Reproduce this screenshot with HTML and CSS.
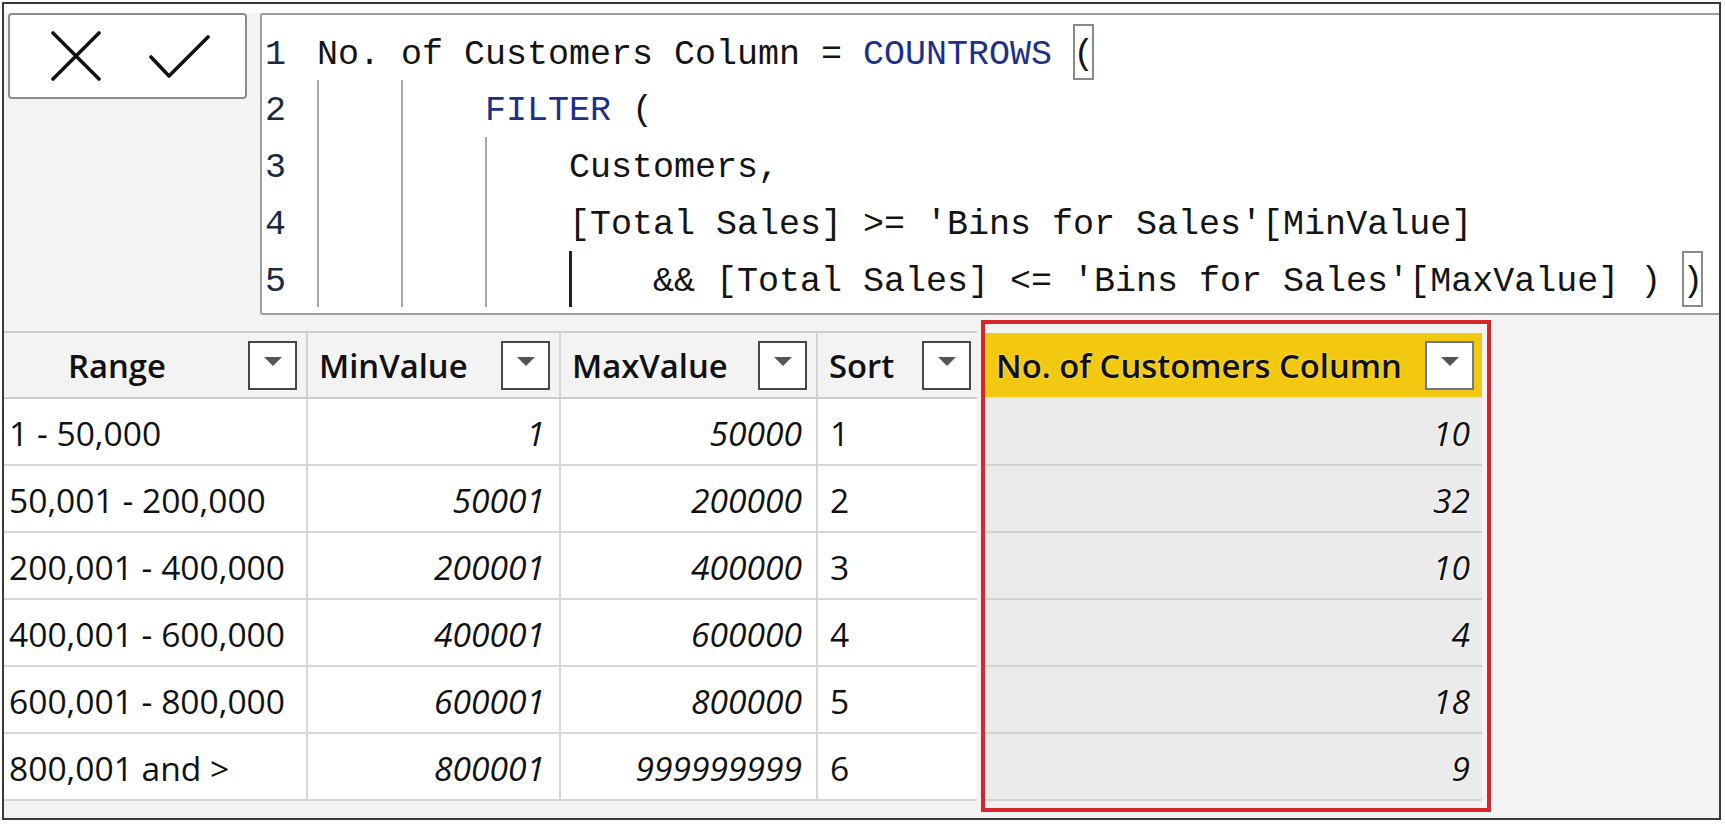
FILE: index.html
```html
<!DOCTYPE html>
<html lang="en">
<head>
<meta charset="utf-8">
<title>No. of Customers Column</title>
<link rel="stylesheet" href="styles.css">
</head>
<body>
<div class="frame">
  <div class="fbar">
    <div class="btns">
      <svg class="ic-x" width="50" height="50" viewBox="0 0 50 50"><path d="M2 2L48 48M48 2L2 48" fill="none" stroke="#111" stroke-width="3.6" stroke-linecap="round"/></svg>
      <svg class="ic-ok" width="62" height="44" viewBox="0 0 62 44"><path d="M2 22L20 41L59 2" fill="none" stroke="#111" stroke-width="3.6" stroke-linecap="round" stroke-linejoin="round"/></svg>
    </div>
    <div class="code">
      <div class="ln"><span class="num">1</span><span class="src">No. of Customers Column = <span class="kw">COUNTROWS</span> <span class="br">(</span></span></div>
      <div class="ln"><span class="num">2</span><span class="src"><span class="ind"></span><span class="ind"></span><span class="kw">FILTER</span> (</span></div>
      <div class="ln"><span class="num">3</span><span class="src"><span class="ind"></span><span class="ind"></span><span class="ind"></span>Customers,</span></div>
      <div class="ln"><span class="num">4</span><span class="src"><span class="ind"></span><span class="ind"></span><span class="ind"></span>[Total Sales] &gt;= 'Bins for Sales'[MinValue]</span></div>
      <div class="ln"><span class="num">5</span><span class="src"><span class="ind"></span><span class="ind"></span><span class="ind"></span><span class="ind dark"></span>&amp;&amp; [Total Sales] &lt;= 'Bins for Sales'[MaxValue] ) <span class="br">)</span></span></div>
    </div>
  </div>

  <div class="table">
    <div class="grid">
      <div class="h c1 range"><span>Range</span><span class="dd"></span></div>
      <div class="h c2"><span>MinValue</span><span class="dd"></span></div>
      <div class="h c3"><span>MaxValue</span><span class="dd"></span></div>
      <div class="h c4"><span>Sort</span><span class="dd"></span></div>
      <div class="h cc"><span>No. of Customers Column</span><span class="dd blue"></span></div>

      <div class="d c1">1 - 50,000</div>
      <div class="d c2 num-r">1</div>
      <div class="d c3 num-r">50000</div>
      <div class="d c4">1</div>
      <div class="d cc num-r">10</div>

      <div class="d c1">50,001 - 200,000</div>
      <div class="d c2 num-r">50001</div>
      <div class="d c3 num-r">200000</div>
      <div class="d c4">2</div>
      <div class="d cc num-r">32</div>

      <div class="d c1">200,001 - 400,000</div>
      <div class="d c2 num-r">200001</div>
      <div class="d c3 num-r">400000</div>
      <div class="d c4">3</div>
      <div class="d cc num-r">10</div>

      <div class="d c1">400,001 - 600,000</div>
      <div class="d c2 num-r">400001</div>
      <div class="d c3 num-r">600000</div>
      <div class="d c4">4</div>
      <div class="d cc num-r">4</div>

      <div class="d c1">600,001 - 800,000</div>
      <div class="d c2 num-r">600001</div>
      <div class="d c3 num-r">800000</div>
      <div class="d c4">5</div>
      <div class="d cc num-r">18</div>

      <div class="d c1">800,001 and &gt;</div>
      <div class="d c2 num-r">800001</div>
      <div class="d c3 num-r">999999999</div>
      <div class="d c4">6</div>
      <div class="d cc num-r">9</div>
    </div>
    <div class="highlight"></div>
  </div>
</div>
</body>
</html>
```

FILE: styles.css
```css
* { box-sizing: border-box; }

html, body {
  margin: 0;
  padding: 0;
  background: #ffffff;
}

.frame {
  margin: 2px 0 0 2px;
  width: 1719px;
  height: 818px;
  border: 2px solid #3a3a3a;
  background: #f3f3f3;
  overflow: hidden;
}

/* ---------- formula bar ---------- */
.fbar {
  height: 327px;
  display: flex;
  align-items: flex-start;
  padding: 9px 0 0 4px;
  gap: 13px;
  background: linear-gradient(#ffffff 0, #ffffff 9px, #f3f3f3 9px);
}

.btns {
  width: 239px;
  height: 86px;
  border: 2px solid #8c8c8c;
  border-radius: 4px;
  background: #ffffff;
  display: flex;
  align-items: center;
  padding-left: 41px;
  gap: 48px;
}

.ic-ok { margin-top: 1px; }

.code {
  flex: 1;
  height: 302px;
  border: 2px solid #9d9d9d;
  border-right: none;
  border-radius: 3px 0 0 3px;
  background: #ffffff;
  padding: 8.6px 0 0 3px;
  font-family: "Liberation Mono", "DejaVu Sans Mono", monospace;
  font-size: 35px;
  color: #141414;
}

.ln {
  display: flex;
  align-items: flex-start;
  height: 56.75px;
  white-space: pre;
}

.num, .src {
  line-height: 62px;
}

.num {
  width: 52px;
  color: #1b2a44;
}

.src { white-space: pre; }

.kw { color: #1d2f86; }

.ind {
  display: inline-block;
  width: 84px;
  height: 56.75px;
  vertical-align: top;
  background: linear-gradient(#a8a8a8, #a8a8a8) no-repeat 0 0 / 2px 100%;
}

.ind.dark {
  background: linear-gradient(#222, #222) no-repeat 0 0 / 3px 100%;
}

.br {
  display: inline-block;
  height: 56.75px;
  line-height: 62px;
  vertical-align: top;
  box-shadow: inset 0 0 0 2px #8a8a8a;
}

/* ---------- table ---------- */
.table {
  position: relative;
}

.grid {
  display: grid;
  grid-template-columns: 304px 253px 257px 159px 505px;
  font-family: "Open Sans", "Noto Sans", sans-serif;
  color: #111;
}

.h {
  height: 68px;
  border-top: 2px solid #cdcdcd;
  border-bottom: 2px solid #cdcdcd;
  background: #f3f3f3;
  display: flex;
  align-items: center;
  justify-content: space-between;
  padding: 0 9px 0 11px;
  font-size: 32.8px;
  font-weight: 600;
}

.h.range { padding-left: 64px; }

.h.c1, .h.c2, .h.c3 { border-right: 2px solid #d3d3d3; }
.h.c4 { padding-right: 6px; }

.h.cc {
  margin-left: 8px;
  background: #f2c811;
  border-top-color: #f3f3f3;
  border-bottom-color: #e6e6e6;
  padding-right: 8px;
  text-shadow: 0 0 2px #fff6b0;
}

.dd {
  width: 49px;
  height: 49px;
  border: 2px solid #474747;
  background: #ffffff;
  display: flex;
  justify-content: center;
  align-items: center;
  flex: none;
}

.dd::after {
  content: "";
  margin-top: -7px;
  border-left: 9px solid transparent;
  border-right: 9px solid transparent;
  border-top: 9px solid #555555;
}

.dd.blue { border-color: #6a7896; }

.d {
  height: 67px;
  border-bottom: 2px solid #d6d6d6;
  background: #ffffff;
  display: flex;
  align-items: center;
  font-size: 33.6px;
  padding: 2px 12px 0;
}

.d.c1 { padding-left: 5px; }
.d.c1, .d.c2, .d.c3 { border-right: 2px solid #d6d6d6; }

.num-r {
  justify-content: flex-end;
  font-style: italic;
  padding-right: 14px;
}

.d.cc {
  margin-left: 8px;
  background: #ebebeb;
  border-bottom-color: #d2d2d2;
  padding-right: 12px;
  text-shadow: 0 0 2px #ffffff, 0 0 2px #ffffff;
}

.highlight {
  position: absolute;
  left: 977px;
  top: -11px;
  width: 510px;
  height: 492px;
  border: 4px solid #d7262b;
  pointer-events: none;
}
```
